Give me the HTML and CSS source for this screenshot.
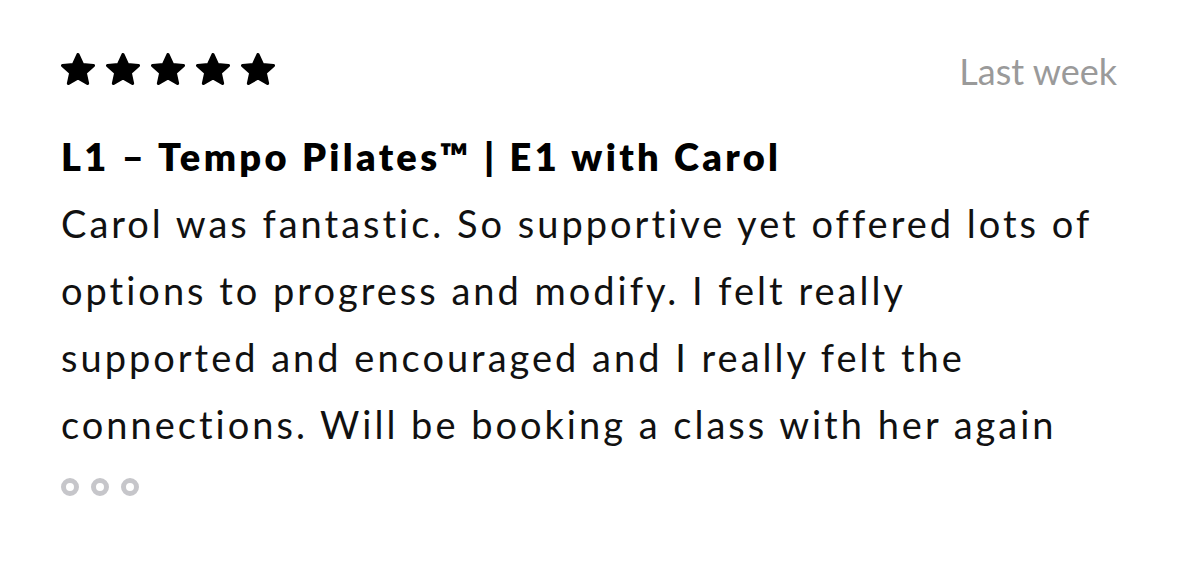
FILE: index.html
```html
<!DOCTYPE html>
<html lang="en">
<head>
<meta charset="utf-8">
<title>Review</title>
<link rel="stylesheet" href="styles.css">
</head>
<body>
<article class="review">
  <header class="review-head">
    <div class="stars" aria-label="5 stars">
      <svg class="star" viewBox="1.5 1.4 21 20.1" preserveAspectRatio="none"><path d="M12 2.4L14.76 8.6L21.51 9.31L16.470 13.85L17.88 20.49L12 17.1L6.12 20.49L7.53 13.85L2.49 9.31L9.24 8.6Z"/></svg>
      <svg class="star" viewBox="1.5 1.4 21 20.1" preserveAspectRatio="none"><path d="M12 2.4L14.76 8.6L21.51 9.31L16.47 13.85L17.88 20.49L12 17.1L6.12 20.49L7.53 13.85L2.49 9.31L9.24 8.6Z"/></svg>
      <svg class="star" viewBox="1.5 1.4 21 20.1" preserveAspectRatio="none"><path d="M12 2.4L14.76 8.6L21.51 9.31L16.47 13.85L17.88 20.49L12 17.1L6.12 20.49L7.53 13.85L2.49 9.31L9.24 8.6Z"/></svg>
      <svg class="star" viewBox="1.5 1.4 21 20.1" preserveAspectRatio="none"><path d="M12 2.4L14.76 8.6L21.51 9.31L16.47 13.85L17.88 20.49L12 17.1L6.12 20.49L7.53 13.85L2.49 9.31L9.24 8.6Z"/></svg>
      <svg class="star" viewBox="1.5 1.4 21 20.1" preserveAspectRatio="none"><path d="M12 2.4L14.76 8.6L21.51 9.31L16.47 13.85L17.88 20.49L12 17.1L6.12 20.49L7.53 13.85L2.49 9.31L9.24 8.6Z"/></svg>
    </div>
    <span class="date">Last week</span>
  </header>
  <h2 class="title">L1 – Tempo Pilates™ | E1 with Carol</h2>
  <p class="body">Carol was fantastic. So supportive yet offered lots of<br>options to progress and modify. I felt really<br>supported and encouraged and I really felt the<br>connections. Will be booking a class with her again</p>
  <div class="dots"><span class="dot"></span><span class="dot"></span><span class="dot"></span></div>
</article>
</body>
</html>
```
FILE: styles.css
```css
html, body {
  margin: 0;
  padding: 0;
  background: #fff;
}
body {
  font-family: Lato, "Noto Sans", sans-serif;
  color: #111;
}
.review {
  padding: 53px 62px 0 61px;
}
.review-head {
  display: flex;
  justify-content: space-between;
  align-items: center;
  height: 32px;
}
.stars {
  display: flex;
  gap: 11px;
}
.star {
  width: 34px;
  height: 32px;
  display: block;
}
.star path {
  fill: #000;
  stroke: #000;
  stroke-width: 2;
  stroke-linejoin: round;
}
.date {
  font-size: 36px;
  color: #9a9a9a;
  letter-spacing: 0;
  line-height: 1;
  margin-top: 4px;
}
.title {
  margin: 49px 0 0;
  font-size: 38px;
  font-weight: 800;
  line-height: 44px;
  color: #000;
  letter-spacing: 3.3px;
}
.body {
  margin: 12px 0 0;
  font-size: 38px;
  line-height: 67px;
  letter-spacing: 3px;
  color: #111;
}
.dots {
  display: flex;
  gap: 12px;
  margin-top: 20px;
}
.dot {
  width: 18px;
  height: 18px;
  box-sizing: border-box;
  border: 5px solid #c6c6ca;
  border-radius: 50%;
}
```
